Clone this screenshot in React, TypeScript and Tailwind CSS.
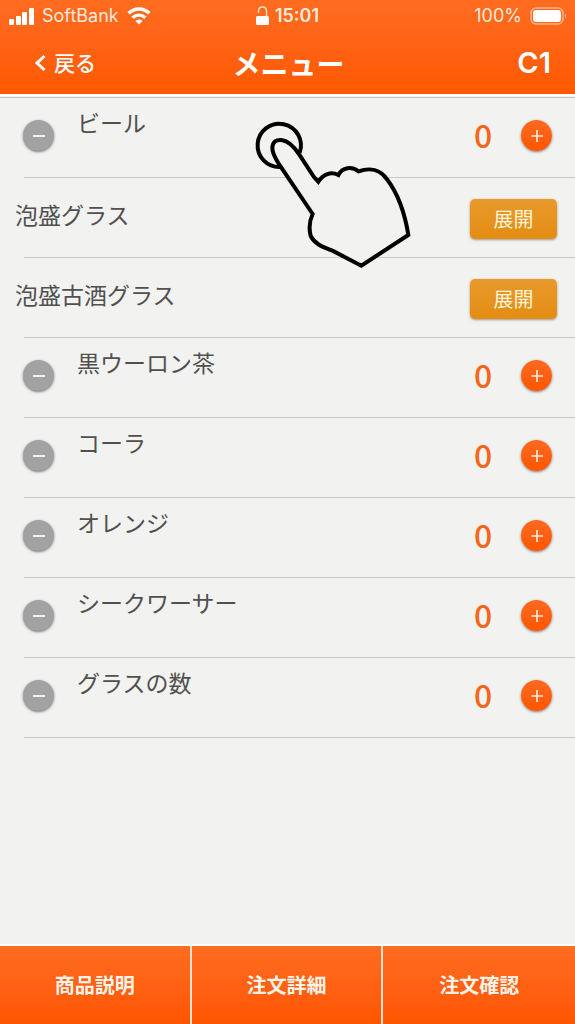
import { useState } from 'react'

type Item = { name: string; group?: boolean }

const items: Item[] = [
  { name: 'ビール' },
  { name: '泡盛グラス', group: true },
  { name: '泡盛古酒グラス', group: true },
  { name: '黒ウーロン茶' },
  { name: 'コーラ' },
  { name: 'オレンジ' },
  { name: 'シークワーサー' },
  { name: 'グラスの数' },
]

function StatusBar() {
  return (
    <div className="grid h-8 grid-cols-3 items-center px-2 font-['Inter','Noto_Sans_CJK_JP',sans-serif] text-lg text-[#ffeadb]">
      <div className="flex items-center gap-2">
        <svg width="26" height="17" viewBox="0 0 26 17" fill="white">
          <rect x="1" y="11" width="5" height="6" rx="1" />
          <rect x="8" y="8" width="5" height="9" rx="1" />
          <rect x="14" y="4" width="5" height="13" rx="1" />
          <rect x="21" y="0" width="5" height="17" rx="1" />
        </svg>
        <span>SoftBank</span>
        <svg width="24" height="18" viewBox="0 0 24 18" fill="none" stroke="white" strokeWidth="3.4">
          <path d="M1.6 6.3C7.5 0.6 16.5 0.6 22.4 6.3" />
          <path d="M5.6 10.7C9.3 7.2 14.7 7.2 18.4 10.7" />
          <path d="M12 17.5L8.4 14C10.5 12 13.5 12 15.6 14Z" fill="white" stroke="none" />
        </svg>
      </div>
      <div className="flex items-center justify-center gap-1.5">
        <svg width="13" height="20" viewBox="0 0 13 20" fill="none">
          <path d="M2.5 7V5C2.5 -0.5 10.5 -0.5 10.5 5V10" stroke="#ffe0cc" strokeWidth="1.5" />
          <rect x="0" y="10" width="13" height="9" rx="1.5" fill="white" />
        </svg>
        <span className="font-semibold">15:01</span>
      </div>
      <div className="flex items-center justify-end gap-2">
        <span>100%</span>
        <svg width="37" height="18" viewBox="0 0 37 18" fill="none">
          <rect x="1" y="1" width="32" height="16" rx="5" stroke="#ffb48a" strokeWidth="1.5" />
          <rect x="3" y="3" width="28" height="12" rx="3" fill="white" />
          <path d="M35 6.5C36.6 7.5 36.6 10.5 35 11.5Z" fill="#ffb48a" />
        </svg>
      </div>
    </div>
  )
}

function Counter({ name }: { name: string }) {
  const [count, setCount] = useState(0)

  return (
    <div className="flex h-[79px] items-start px-[23px]">
      <button
        aria-label={`${name}を減らす`}
        onClick={() => setCount(Math.max(0, count - 1))}
        className="mt-[22px] flex size-[31px] items-center justify-center rounded-full bg-[#a2a2a2] shadow-sm shadow-black/40"
      >
        <svg width="14" height="14" viewBox="0 0 14 14" stroke="#f4f4f4" strokeWidth="2">
          <path d="M1 7H13" />
        </svg>
      </button>
      <span className="mt-2 ml-[23px] flex-1 text-[23px] leading-8">{name}</span>
      <span className="mt-5 w-8 text-center text-[32px] leading-8 font-medium text-[#f8641c]">{count}</span>
      <button
        aria-label={`${name}を増やす`}
        onClick={() => setCount(count + 1)}
        className="mt-[22px] ml-[22px] flex size-[31px] items-center justify-center rounded-full bg-linear-to-b from-[#ff6a1e] to-[#ff5500] shadow-sm shadow-black/40"
      >
        <svg width="14" height="14" viewBox="0 0 14 14" stroke="#ffe9d9" strokeWidth="1.7">
          <path d="M1 7H13M7 1V13" />
        </svg>
      </button>
    </div>
  )
}

function Group({ name }: { name: string }) {
  return (
    <div className="flex h-[79px] items-start justify-between pr-[18px] pl-[15px]">
      <span className="mt-5 text-[23px] leading-8">{name}</span>
      <button className="mt-[21px] h-10 w-[87px] rounded-[5px] bg-linear-to-b from-[#e99a2b] to-[#e38c10] text-xl text-[#fff6d8] shadow-sm shadow-black/30">
        展開
      </button>
    </div>
  )
}

function TapHand() {
  return (
    <svg
      className="pointer-events-none absolute top-2 left-60"
      width="190"
      height="170"
      viewBox="0 0 570 510"
      fill="none"
      stroke="black"
      strokeWidth="12"
    >
      <path d="M122 183A65 65 0 1 1 179 140" />
      <path
        fill="#f2f2f0"
        d="M218 324L116 173C104 151 97 143 97 125C98 106 109 101 124 102C144 104 163 123 178 146L222 213L235 227C250 204 273 196 295 207C307 183 336 180 356 196C390 184 421 191 441 220C476 266 495 325 505 387L364 479L283 437C253 424 226 417 212 390C207 370 208 345 218 324Z"
      />
    </svg>
  )
}

export default function App() {
  return (
    <div className="flex min-h-screen flex-col bg-[#f2f2f0] font-['Noto_Sans_CJK_JP',sans-serif] text-[#505050]">
      <header className="border-b-2 border-white bg-linear-to-b from-[#ff6c20] to-[#ff5800] text-white">
        <StatusBar />
        <div className="grid h-[62px] grid-cols-3 items-center pr-6 pl-[34px]">
          <button className="flex items-center gap-2 text-[21px] font-medium">
            <svg width="12" height="18" viewBox="0 0 12 18" fill="none" stroke="white" strokeWidth="3">
              <path d="M10.5 2L3 9L10.5 16" />
            </svg>
            戻る
          </button>
          <h1 className="pr-2 text-center text-[28px] leading-8 font-bold">メニュー</h1>
          <span className="text-right font-['Inter',sans-serif] text-[29px] leading-8 font-semibold">C1</span>
        </div>
      </header>

      <main className="relative mt-px flex-1 border-t border-[#c4c4c2]">
        <ul>
          {items.map(item => (
            <li key={item.name}>
              {item.group ? <Group name={item.name} /> : <Counter name={item.name} />}
              <div className="ml-6 border-b border-[#c9c9c7]" />
            </li>
          ))}
        </ul>
        <TapHand />
      </main>

      <footer className="grid h-20 grid-cols-3 divide-x-2 divide-[#ffe3d0] border-t-2 border-white bg-linear-to-b from-[#ff6c20] to-[#ff5500] text-xl font-bold text-[#fff3e8]">
        <button>商品説明</button>
        <button>注文詳細</button>
        <button>注文確認</button>
      </footer>
    </div>
  )
}
